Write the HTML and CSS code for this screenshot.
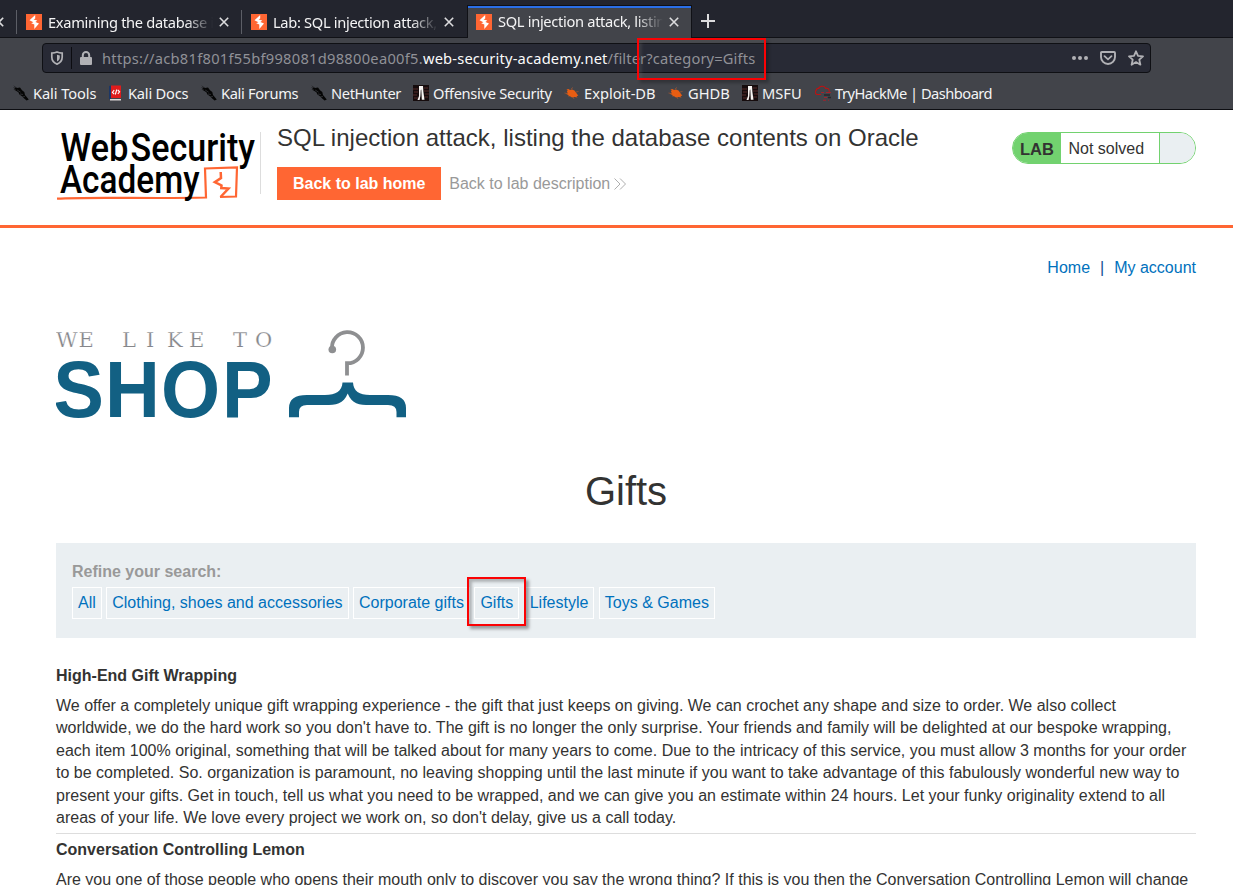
FILE: index.html
```html
<!DOCTYPE html>
<html lang="en">
<head>
<meta charset="utf-8">
<title>SQL injection attack, listing the database contents on Oracle</title>
<link rel="stylesheet" href="styles.css">
</head>
<body>
<svg class="defs" width="0" height="0" aria-hidden="true">
  <symbol id="burp" viewBox="0 0 16 16"><rect width="16" height="16" fill="#ff6633"/><path d="M9.2 1 3.5 6.2 7.4 8.3 5.2 9.2 8.3 10.6V15L13 9.6 9.4 8 11.3 6.6 7.6 5.6 9.2 4.5Z" fill="#fff"/></symbol>
  <symbol id="close" viewBox="0 0 10 10"><path d="M.8.8 9.2 9.2M9.2.8.8 9.2" stroke="#dcdcde" stroke-width="1.6" fill="none"/></symbol>
  <symbol id="kali" viewBox="0 0 16 16"><path d="M.2.3 4 3 7 2.6 9 5.2 11.3 7 12 10 15.8 14.4 13.6 15.4 11.2 13.6 9 11.2 6.4 9.4 5.4 7.2 2.6 5.4.4 4.6 3 4.5.1 2.5 3 3.1Z" fill="#050505"/><path d="M4.2 5 7.6 7.2M7 9 10 9.5M9.5 11.8 12 11.5" stroke="#42444a" stroke-width=".6"/></symbol>
  <symbol id="offsec" viewBox="0 0 16 16"><rect width="16" height="16" fill="#160c0d"/><path d="M0 4H5M1 7H5M0 10H4M1 13H5M11 3H15M11 6H16M12 9H16M11 12H15" stroke="#542b2b"/><path d="M6 1H10L10.4 7 11.5 14.8H8.8L8.3 4.5 7.8 5 7.4 11 6.6 15H4.5L6 11Z" fill="#f7f4f2"/></symbol>
  <symbol id="edb" viewBox="0 0 16 16"><path d="M2.5 4.5 4.5 4 6 5 8 4.5 10.5 5.5 12.5 8.2 14.3 10.7 12.5 11 13.5 12.6 10.5 12 8 12.4 6 11.2 4 11.2 4.8 10.2 1.8 8.8 3.9 8.2 2.8 6.4 3.8 5.8Z" fill="#e85d12"/><path d="M7 4 9 2.5M12 7 14.5 6.5M.5 8 3 8.5M9 12 10 14" stroke="#a85730" stroke-width=".7"/></symbol>
</svg>

<div class="chrome">
  <div class="tabs">
    <div class="tab-stub"><svg class="x" width="10" height="10"><use href="#close"/></svg></div>
    <div class="tab"><svg width="16" height="16"><use href="#burp"/></svg><span class="tab-title">Examining the database in SQL</span><svg class="x" width="10" height="10"><use href="#close"/></svg></div>
    <div class="tab"><svg width="16" height="16"><use href="#burp"/></svg><span class="tab-title">Lab: SQL injection attack, listing</span><svg class="x" width="10" height="10"><use href="#close"/></svg></div>
    <div class="tab active"><svg width="16" height="16"><use href="#burp"/></svg><span class="tab-title">SQL injection attack, listing the</span><svg class="x" width="10" height="10"><use href="#close"/></svg></div>
    <svg class="plus" width="14" height="14" viewBox="0 0 14 14"><path d="M7 0V14M0 7H14" stroke="#dcdcde" stroke-width="2"/></svg>
  </div>
  <div class="nav">
    <div class="url">
      <svg class="shield" width="14" height="14" viewBox="0 0 14 14"><path d="M7 1C9 1.8 10.8 2 12.2 2.1V6C12.2 9.5 10 11.9 7 13.1 4 11.9 1.8 9.5 1.8 6V2.1C3.2 2 5 1.8 7 1Z" fill="none" stroke="#b1b1b5" stroke-width="1.7"/><path d="M7 3.8V10.6C8.9 9.6 9.8 8 9.8 6V4.4Z" fill="#b1b1b5"/></svg>
      <i class="divider"></i>
      <svg class="lock" width="12" height="14" viewBox="0 0 12 14"><path d="M2.8 7V4.2a3.2 3.2 0 0 1 6.4 0V7" fill="none" stroke="#b1b1b5" stroke-width="2"/><rect y="6" width="12" height="8" rx="1" fill="#b1b1b5"/></svg>
      <span class="address"><span class="host">https://acb81f801f55bf998081d98800ea00f5.</span><b>web-security-academy.net</b>/filter?category=Gifts</span>
      <svg width="16" height="6" viewBox="0 0 16 6"><circle cx="2" cy="3" r="2"/><circle cx="8" cy="3" r="2"/><circle cx="14" cy="3" r="2"/></svg>
      <svg width="16" height="14" viewBox="0 0 16 14"><path d="M1.9 1H14.1Q15 1 15 2V6A7 7 0 0 1 1 6V2Q1 1 1.9 1Z" fill="none" stroke="#b1b1b5" stroke-width="1.9"/><path d="M4.5 5.2 8 8.4 11.5 5.2" fill="none" stroke="#b1b1b5" stroke-width="1.8" stroke-linecap="round"/></svg>
      <svg width="16" height="16" viewBox="0 0 16 16"><path d="M8 1.3 10 5.8 15 6.3 11.3 9.7 12.4 14.7 8 12.1 3.6 14.7 4.7 9.7 1 6.3 6 5.8Z" fill="none" stroke="#b1b1b5" stroke-width="1.8" stroke-linejoin="round"/></svg>
    </div>
  </div>
  <div class="bookmarks">
    <span class="bm bm-tools"><svg width="16" height="16"><use href="#kali"/></svg>Kali Tools</span>
    <span class="bm bm-docs"><svg width="16" height="16" viewBox="0 0 16 16"><path d="M1 1 3 .5V15L1 14Z" fill="#1c3766"/><path d="M3 .5H13V13H3Z" fill="#df1c1c"/><path d="M2 14H13V15.5H2Z" fill="#ddd6d6"/><path d="M6.2 5 4.4 7.4 6.2 9M9.8 5 11.6 6.8 9.8 9M8.8 4.5 7.3 9.5" stroke="#fff" stroke-width="1.1" fill="none"/></svg>Kali Docs</span>
    <span class="bm bm-forums"><svg width="16" height="16"><use href="#kali"/></svg>Kali Forums</span>
    <span class="bm bm-net"><svg width="16" height="16"><use href="#kali"/></svg>NetHunter</span>
    <span class="bm bm-offsec"><svg width="16" height="16"><use href="#offsec"/></svg>Offensive Security</span>
    <span class="bm bm-edb"><svg width="16" height="16"><use href="#edb"/></svg>Exploit-DB</span>
    <span class="bm bm-ghdb"><svg width="16" height="16"><use href="#edb"/></svg>GHDB</span>
    <span class="bm bm-msfu"><svg width="16" height="16"><use href="#offsec"/></svg>MSFU</span>
    <span class="bm bm-thm"><svg width="16" height="16" viewBox="0 0 16 16"><path d="M6 9.5H2.6A2.3 2.3 0 0 1 1.3 5.3 2 2 0 0 1 3.8 3.4C4.2 1.2 9.5-.1 10.7 3.4 13 2.8 14.8 4.6 14 6.7" fill="none" stroke="#c11111" stroke-width="1.1"/><path d="M6 7.5H9M11 7.5H16M9 12.5H12M8 15.2H11M13 15.2H14" stroke="#a5202a"/><path d="M9 10H15M13 12.5H16" stroke="#25272c" stroke-width="1.3"/></svg>TryHackMe | Dashboard</span>
  </div>
</div>

<header class="lab-header">
  <svg class="wsa" width="205" height="80" viewBox="56 126 205 80">
    <path d="M57 198.7C90 196.5 150 199 206 197.5L205 168.5 237 167.5 236 196.5 220 197" fill="none" stroke="#ff6633" stroke-width="2.2"/>
    <path d="M220.7 172 221 178 214.8 182.2 221.5 185.5 221.3 188 228.5 188.5 220.5 197" fill="none" stroke="#ff6633" stroke-width="2.5"/>
    <g class="wsa-text"><text x="60.5" y="161" textLength="68" lengthAdjust="spacingAndGlyphs">Web</text><text x="130.5" y="161" textLength="124.5" lengthAdjust="spacingAndGlyphs">Security</text><text x="60" y="193" textLength="139.5" lengthAdjust="spacingAndGlyphs">Academy</text></g>
    <path d="M260.5 132V194" stroke="#ddd"/>
  </svg>
  <div class="lab-info">
    <h2>SQL injection attack, listing the database contents on Oracle</h2>
    <div class="actions"><a class="button">Back to lab home</a><a class="back">Back to lab description<svg width="12" height="12" viewBox="0 0 12 12"><path d="M.5.5 6 6 .5 11.5M6 .5 11.5 6 6 11.5" fill="none" stroke="#999" stroke-width=".8"/></svg></a></div>
  </div>
  <div class="status"><span class="lab">LAB</span><span class="state">Not solved</span><span class="flask"></span></div>
</header>

<main>
  <nav class="top-links"><a>Home</a><span>|</span><a>My account</a></nav>
  <svg class="shop" width="352" height="92" viewBox="56 330 352 92">
    <text class="like" x="56 78.5 122 146 167 189 233 255" y="346.7">WELIKETO</text>
    <text class="word" x="56 110.4 169.4 233.6" y="417.3" transform="scale(.95 1)">SHOP</text>
    <path d="M332 349A15.5 15.5 0 1 1 347 363.2V375.5" fill="none" stroke="#8e8f91" stroke-width="3.8"/><circle cx="332.3" cy="349.5" r="3.8" fill="#8e8f91"/>
    <path d="M342.5 382.5H353C353.5 391 359 395 370 395H388Q406 395 406 408V417.3H396.5V412Q396.5 405 388 405H370C359 405 352 404 347.7 393.5 343.5 404 336 405 325 405H307Q299 405 299 412V417.3H289V408Q289 395 307 395H325C336 395 342 391 342.5 382.5Z" fill="#126083"/>
  </svg>
  <h1>Gifts</h1>
  <section class="filters">
    <label>Refine your search:</label>
    <div class="chips"><a>All</a><a>Clothing, shoes and accessories</a><a>Corporate gifts</a><a class="gifts">Gifts<i class="mark mark-chip"></i></a><a>Lifestyle</a><a>Toys &amp; Games</a></div>
  </section>
  <article><h3>High-End Gift Wrapping</h3>
    <p>We offer a completely unique gift wrapping experience - the gift that just keeps on giving. We can crochet any shape and size to order. We also collect<br>worldwide, we do the hard work so you don't have to. The gift is no longer the only surprise. Your friends and family will be delighted at our bespoke wrapping,<br>each item 100% original, something that will be talked about for many years to come. Due to the intricacy of this service, you must allow 3 months for your order<br>to be completed. So. organization is paramount, no leaving shopping until the last minute if you want to take advantage of this fabulously wonderful new way to<br>present your gifts. Get in touch, tell us what you need to be wrapped, and we can give you an estimate within 24 hours. Let your funky originality extend to all<br>areas of your life. We love every project we work on, so don't delay, give us a call today.</p></article>
  <article><h3>Conversation Controlling Lemon</h3>
    <p>Are you one of those people who opens their mouth only to discover you say the wrong thing? If this is you then the Conversation Controlling Lemon will change</p></article>
</main>
<i class="mark mark-url"></i>
</body>
</html>
```
FILE: styles.css
```css
* { box-sizing: border-box; }
html, body { height: 885px; overflow: hidden; }
body { margin: 0; position: relative; background: #fff; color: #333332; font: 16px/22.4px "Liberation Sans", Arial, sans-serif; }
svg { display: block; flex: none; }
.defs { position: absolute; }

.chrome { height: 110px; background: #42444a; border-bottom: 1px solid #0d0e12; color: #f4f4f5; font: 14.67px/20px "Noto Sans", sans-serif; overflow: hidden; }
.tabs { height: 38px; background: #23252e; border-bottom: 1px solid #101116; display: flex; align-items: flex-start; }
.tab-stub { width: 17px; height: 24px; margin-top: 10px; border-right: 1px solid #5c5e66; display: flex; align-items: center; }
.tab-stub .x { margin-left: -6px; }
.tab { width: 225px; height: 24px; margin-top: 10px; padding: 0 11px 0 9px; border-right: 1px solid #5c5e66; display: flex; align-items: center; }
.tab-title { width: 165px; margin: -1px 6px 0 6px; letter-spacing: -.32px; white-space: nowrap; overflow: hidden; flex: none; mask-image: linear-gradient(90deg, #000 138px, transparent 165px); }
.tab:nth-child(3) { border: 0; }
.tab.active { height: 33px; margin-top: 5px; padding: 0 11px 1px 8px; background: #42444a; border: 1px solid #101116; border-width: 1px 1px 0; box-shadow: inset 0 2px #2a6fe8; }
.plus { margin: 14px 0 0 9px; }
.nav { height: 40px; padding: 5px 82px 0 42px; }
.url { height: 30px; background: #282a35; border: 1px solid #0f1014; border-radius: 4px; display: flex; align-items: center; fill: #b1b1b5; padding: 0 6px 0 7px; gap: 12px; }
.shield, .lock { margin-right: -12px; }
.divider { width: 1px; height: 22px; background: #0c0c11; margin: 0 -4px 0 7px; }
.address { flex: 1; margin-left: 10px; color: #909197; white-space: nowrap; letter-spacing: .15px; }
.address .host { letter-spacing: .28px; }
.address b { font-weight: 400; color: #fbfbfb; letter-spacing: .19px; }
.bookmarks { height: 30px; display: flex; align-items: center; padding-left: 13px; white-space: nowrap; }
.bm { display: flex; align-items: center; gap: 4px; flex: none; }
.bm-tools { width: 95px; letter-spacing: -.1px; }
.bm-docs { width: 93px; letter-spacing: -.22px; }
.bm-forums { width: 110px; letter-spacing: -.34px; }
.bm-net { width: 102px; letter-spacing: -.36px; }
.bm-offsec { width: 151px; letter-spacing: -.3px; }
.bm-edb { width: 104px; }
.bm-ghdb { width: 74px; }
.bm-msfu { width: 73px; }
.bm-thm { letter-spacing: -.52px; }

.mark { position: absolute; border: 2px solid #fb0204; box-shadow: 3px 3px 3px rgba(0,0,0,.35), inset 3px 3px 3px rgba(0,0,0,.25); }
.mark-url { left: 637px; top: 38px; width: 129px; height: 42px; box-shadow: 3px 3px 3px rgba(0,0,0,.25), inset 3px 3px 3px rgba(100,100,100,.3); }
.mark-chip { left: -8px; top: -11px; width: 59px; height: 49px; }

.lab-header { height: 118px; border-bottom: 3px solid #ff6633; padding: 16px 37px 0 56px; display: flex; align-items: flex-start; }
.wsa-text { font: 500 38px Roboto, sans-serif; fill: #000; }
.lab-info { margin-left: 16px; flex: 1; }
h2 { margin: 0; font-size: 24px; font-weight: 400; line-height: 24px; letter-spacing: .015px; }
.actions { display: flex; align-items: center; gap: 8px; margin-top: 17px; }
.button { background: #ff6633; height: 33px; line-height: 33px; padding: 0 15.8px 0 16px; font-weight: 700; }
.back { display: flex; align-items: center; gap: 4px; padding-top: 1px; }
.back svg { margin-top: -1px; }
.status { width: 184px; height: 32px; margin-top: 6px; border: 1px solid #72d26f; border-radius: 16px; overflow: hidden; display: flex; line-height: 31px; }
.lab { width: 48px; background: #72d26f; font-weight: 700; font-size: 16.5px; line-height: 33px; padding-left: 7px; }
.state { width: 99px; padding-left: 7.5px; border-right: 1px solid #72d26f; }
.flask { flex: 1; background: #eaeff2; }

main { padding: 29px 37px 0 56px; }
a { color: #0071bd; }
a.button { color: #fff; }
a.back { color: #999; }
.top-links { display: flex; justify-content: flex-end; gap: 10px; }
.top-links span { color: #10518f; }
.shop { margin-top: 51px; }
.like { font: 21px "DejaVu Serif", serif; fill: #85868a; stroke: #fff; stroke-width: .25px; }
.word { font: 700 80px "Liberation Sans", sans-serif; fill: #126083; }
h1 { margin: 46px 0 29px; font-size: 40px; font-weight: 400; line-height: 46px; text-align: center; }
.filters { height: 95px; background: #eaeff2; padding: 18px 16px; }
.filters label { display: block; color: #999; font-weight: 700; }
.chips { display: flex; gap: 4.45px; margin-top: 3px; }
.chips a { height: 32px; border: 1px solid #fff; padding: 0 5px; line-height: 30px; position: relative; white-space: nowrap; }
.chips .gifts { z-index: 1; }
article { border-bottom: 1px solid #ddd; white-space: nowrap; }
.filters + article { margin-top: 27px; }
h3 { margin: 0; font-size: 16px; line-height: 22.4px; }
p { margin: 7.2px 0 3.6px; }
article + article h3 { padding-top: 5px; }
```
